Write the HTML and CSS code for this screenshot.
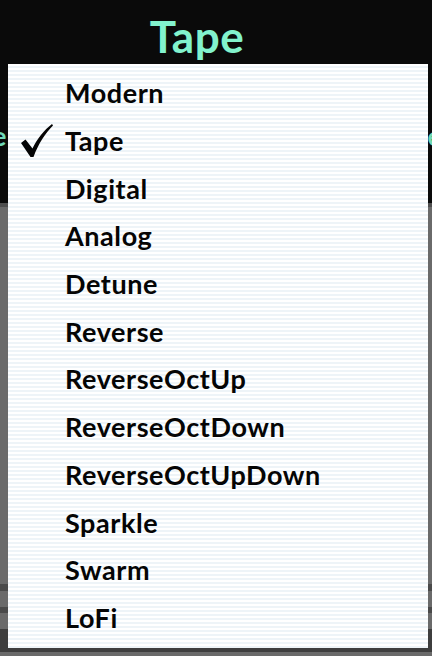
FILE: index.html
```html
<!DOCTYPE html>
<html>
<head>
<meta charset="utf-8">
<link rel="stylesheet" href="styles.css">
</head>
<body>
<div class="app">
  <header class="top">
    <div class="title">Tape</div>
    <div class="side-row">
      <span class="side-e left">e</span>
      <span class="side-e right">e</span>
    </div>
  </header>
  <main class="panel">
    <div class="gap g1"></div>
    <div class="band b2"></div>
    <div class="gap g2"></div>
    <div class="band b3"></div>
  </main>
  <ul class="menu">
    <li class="item">Modern</li>
    <li class="item checked"><svg class="check" width="32" height="34" viewBox="0 0 32 34"><path d="M0 19 L4.5 15.5 L11.5 24.5 C16 15 23 6 31 0 L32 1.5 C24.5 9 17.5 19.5 12.5 33 L9.5 33 Z" fill="#050505"/></svg>Tape</li>
    <li class="item">Digital</li>
    <li class="item">Analog</li>
    <li class="item">Detune</li>
    <li class="item">Reverse</li>
    <li class="item">ReverseOctUp</li>
    <li class="item">ReverseOctDown</li>
    <li class="item">ReverseOctUpDown</li>
    <li class="item">Sparkle</li>
    <li class="item">Swarm</li>
    <li class="item">LoFi</li>
  </ul>
</div>
</body>
</html>
```
FILE: styles.css
```css
* { box-sizing: border-box; }
html, body { margin: 0; padding: 0; }
body {
  width: 432px;
  height: 656px;
  overflow: hidden;
  background: #0a0a0a;
  font-family: Lato, "Open Sans", sans-serif;
}
.app {
  position: relative;
  width: 432px;
  height: 656px;
  display: flex;
  flex-direction: column;
}
.top {
  height: 203px;
  background: #0a0a0a;
  display: flex;
  flex-direction: column;
  align-items: center;
}
.title {
  margin-top: 10px;
  margin-left: -38px;
  color: #82f2cd;
  font-size: 44px;
  font-weight: 700;
  line-height: 52px;
  letter-spacing: 0.5px;
}
.side-row {
  width: 100%;
  display: flex;
  justify-content: space-between;
  margin-top: 59px;
}
.side-e {
  color: #6fd9b8;
  font-size: 27px;
  font-weight: 700;
  line-height: 30px;
}
.side-e.left { margin-left: -8px; }
.side-e.right { margin-right: -10px; }
.panel {
  flex: 1;
  background: #6a6a6a;
  border-top: 4px solid #4e4e4e;
  display: flex;
  flex-direction: column;
}
.gap.g1 { height: 377px; }
.band { background: #4a4a4a; }
.band.b2 { height: 7px; }
.gap.g2 { height: 16px; background: #6a6a6a; }
.band.b3 { height: 6px; }
.panel::after {
  content: "";
  display: block;
  height: 23px;
  margin-top: 16px;
  background: #3e3e3e;
}
.menu {
  position: absolute;
  left: 8px;
  top: 64px;
  width: 420px;
  height: 584px;
  margin: 0;
  padding: 5px 0 5px 0;
  list-style: none;
  background: repeating-linear-gradient(to bottom, #ffffff 0px, #ffffff 2px, #eef4f8 2px, #eef4f8 4px);
  display: flex;
  flex-direction: column;
}
.item {
  position: relative;
  height: 47.7px;
  flex: none;
  display: flex;
  align-items: center;
  padding-left: 57px;
  color: #050505;
  font-size: 27px;
  font-weight: 700;
  letter-spacing: 0.57px;
}
.check {
  position: absolute;
  left: 13px;
  top: 7px;
}
```
